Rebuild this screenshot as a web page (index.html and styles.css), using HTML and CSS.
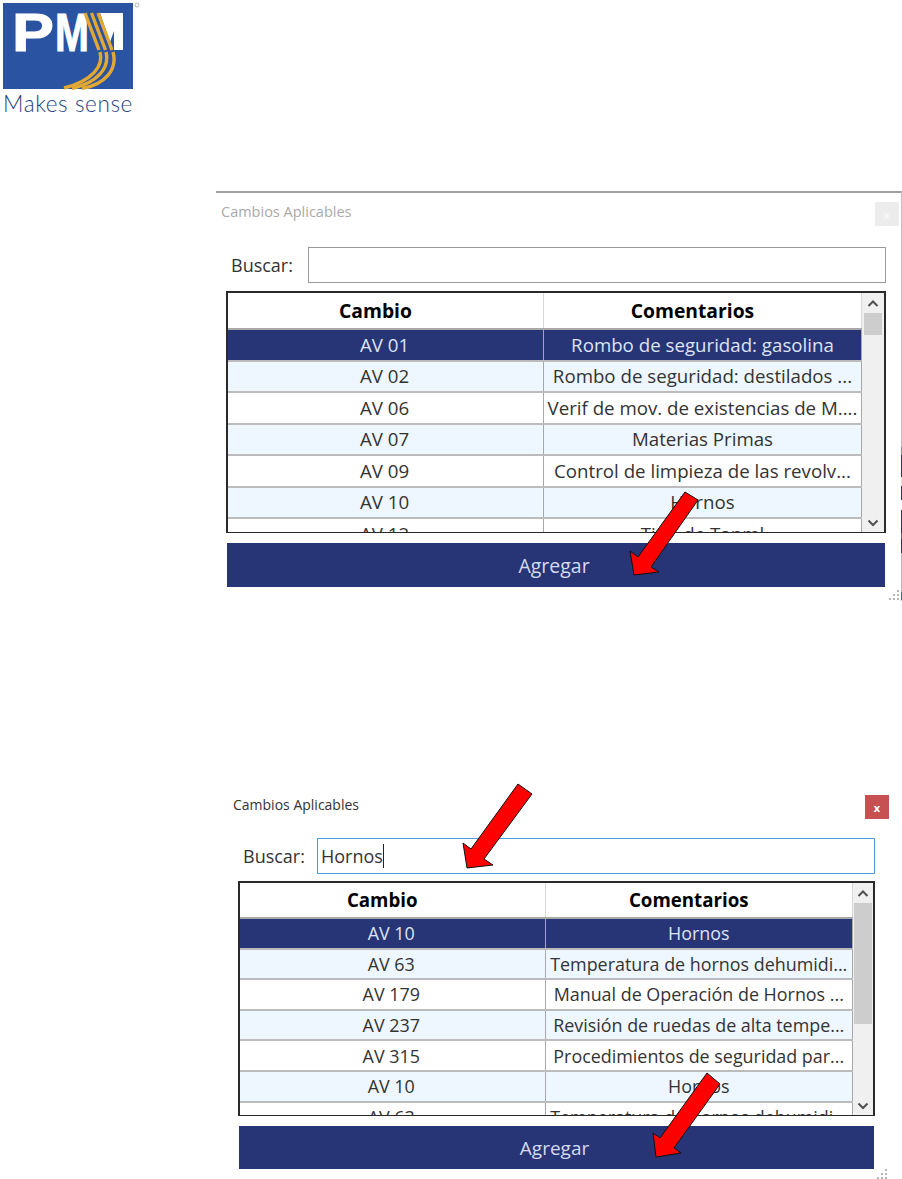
FILE: index.html
```html
<!DOCTYPE html>
<html lang="es">
<head>
<meta charset="utf-8">
<title>Cambios Aplicables</title>
<link rel="stylesheet" href="styles.css">
</head>
<body>
<div class="page">
  <header class="logo">
    <svg class="logo-mark" width="140" height="90" viewBox="0 0 140 90">
      <rect x="3" y="3" width="130" height="86" fill="#2a54a2"/>
      <text x="12" y="51" class="logo-letters" textLength="42" lengthAdjust="spacingAndGlyphs">P</text>
      <text x="55" y="51" class="logo-letters" textLength="34" lengthAdjust="spacingAndGlyphs">M</text>
      <path d="M100 13 L123 13 L123 50 L114 50 L114 31 L110 42 Z" fill="#fff"/>
      <g fill="none" stroke="#e3a832" stroke-width="3.4">
        <path d="M85 13 L99 50"/>
        <path d="M91.5 13 L105.500 50"/>
        <path d="M98 13 L112 50"/>
        <path d="M100 52 C104 66 92 81 64 88"/>
        <path d="M106 52 C110 68 97 83 72 88.5"/>
        <path d="M113 52 C118 70 104 85 82 88.5"/>
      </g>
      <circle cx="137" cy="5" r="2" fill="none" stroke="#999" stroke-width=".7"/>
    </svg>
    <div class="logo-tag">Makes sense</div>
  </header>

  <section class="dialog dialog-faded">
    <div class="title-row">
      <span class="title">Cambios Aplicables</span>
      <span class="close">x</span>
    </div>
    <div class="search-row">
      <label class="search-label">Buscar:</label>
      <div class="search-box"></div>
    </div>
    <div class="grid">
      <div class="grid-body">
        <table class="data">
          <thead><tr><th>Cambio</th><th>Comentarios</th></tr></thead>
          <tbody>
            <tr class="sel"><td>AV 01</td><td>Rombo de seguridad: gasolina</td></tr>
            <tr class="alt"><td>AV 02</td><td>Rombo de seguridad: destilados ...</td></tr>
            <tr><td>AV 06</td><td>Verif de mov. de existencias de M....</td></tr>
            <tr class="alt"><td>AV 07</td><td>Materias Primas</td></tr>
            <tr><td>AV 09</td><td>Control de limpieza de las revolv...</td></tr>
            <tr class="alt"><td>AV 10</td><td>Hornos</td></tr>
            <tr><td>AV 12</td><td>Tipo de Tanml</td></tr>
          </tbody>
        </table>
      </div>
      <div class="scrollbar">
        <svg class="chev" width="22" height="20" viewBox="0 0 22 20"><path d="M6.500 13 L11 8.500 L15.500 13" fill="none" stroke="#505050" stroke-width="2"/></svg>
        <div class="track"><div class="thumb"></div></div>
        <svg class="chev" width="22" height="20" viewBox="0 0 22 20"><path d="M6.500 8.500 L11 13 L15.500 8.500" fill="none" stroke="#505050" stroke-width="2"/></svg>
      </div>
    </div>
    <div class="action">Agregar</div>
    <svg class="grip" width="14" height="11" viewBox="0 0 14 11"><g fill="#b5b5b5"><rect x="10" y="0" width="2" height="2"/><rect x="6" y="4" width="2" height="2"/><rect x="10" y="4" width="2" height="2"/><rect x="2" y="8" width="2" height="2"/><rect x="6" y="8" width="2" height="2"/><rect x="10" y="8" width="2" height="2"/></g></svg>
  </section>

  <section class="dialog dialog-active">
    <div class="title-row">
      <span class="title">Cambios Aplicables</span>
      <span class="close">x</span>
    </div>
    <div class="search-row">
      <label class="search-label">Buscar:</label>
      <div class="search-box"><span class="typed">Hornos</span></div>
    </div>
    <div class="grid">
      <div class="grid-body">
        <table class="data">
          <thead><tr><th>Cambio</th><th>Comentarios</th></tr></thead>
          <tbody>
            <tr class="sel"><td>AV 10</td><td>Hornos</td></tr>
            <tr class="alt"><td>AV 63</td><td>Temperatura de hornos dehumidi...</td></tr>
            <tr><td>AV 179</td><td>Manual de Operación de Hornos ...</td></tr>
            <tr class="alt"><td>AV 237</td><td>Revisión de ruedas de alta tempe...</td></tr>
            <tr><td>AV 315</td><td>Procedimientos de seguridad par...</td></tr>
            <tr class="alt"><td>AV 10</td><td>Hornos</td></tr>
            <tr><td>AV 63</td><td>Temperatura de hornos dehumidi...</td></tr>
          </tbody>
        </table>
      </div>
      <div class="scrollbar">
        <svg class="chev" width="20" height="20" viewBox="0 0 20 20"><path d="M5.500 13 L10 8.500 L14.500 13" fill="none" stroke="#505050" stroke-width="2"/></svg>
        <div class="track"><div class="thumb"></div></div>
        <svg class="chev" width="20" height="20" viewBox="0 0 20 20"><path d="M5.500 8.500 L10 13 L14.500 8.500" fill="none" stroke="#505050" stroke-width="2"/></svg>
      </div>
    </div>
    <div class="action">Agregar</div>
    <svg class="grip" width="14" height="11" viewBox="0 0 14 11"><g fill="#b5b5b5"><rect x="10" y="0" width="2" height="2"/><rect x="6" y="4" width="2" height="2"/><rect x="10" y="4" width="2" height="2"/><rect x="2" y="8" width="2" height="2"/><rect x="6" y="8" width="2" height="2"/><rect x="10" y="8" width="2" height="2"/></g></svg>
  </section>

  <div class="edge-strip"></div>

  <svg class="arrows" width="902" height="1179" viewBox="0 0 902 1179">
    <g fill="#ff0000" stroke="#111" stroke-width="1">
      <polygon points="685,492 698,500 651,567 659,572 634,575 630,551 638,557"/>
      <polygon points="518,784 532,794 484,859 493,865 467,868 463,843 471,849"/>
      <polygon points="707,1073 720,1084 674,1148 681,1153 656,1157 653,1133 660,1138"/>
    </g>
  </svg>
</div>
</body>
</html>
```
FILE: styles.css
```css
* { box-sizing: border-box; }
html, body { margin: 0; padding: 0; background: #fff; }
body { font-family: "Open Sans", "Noto Sans", "Liberation Sans", sans-serif; color: #222; }
.page { position: relative; width: 902px; height: 1179px; overflow: hidden; }

.logo { height: 114px; }
.logo-mark { display: block; }
.logo-letters { font-family: "Liberation Sans", sans-serif; font-weight: 700; font-size: 53px; fill: #fff; stroke: #fff; stroke-width: 1px; }
.logo-tag { margin: 1px 0 0 3px; font-family: Lato, sans-serif; font-weight: 300; font-size: 22.5px; line-height: 26px; letter-spacing: .6px; color: #1f3f80; white-space: nowrap; }

.dialog { position: relative; }
.dialog-faded { margin: 77px 0 0 216px; width: 686px; height: 410px; border-top: 2px solid #a0a0a0; border-right: 1px solid #c0c0c0; padding: 9px 15px 0 10px; }
.dialog-active { margin: 192px 0 0 216px; width: 686px; height: 387px; padding: 2px 27px 0 22px; }

.title-row { display: flex; align-items: center; justify-content: space-between; height: 24px; }
.dialog-faded .title-row { margin: 0 -13px 0 -5px; }
.dialog-active .title-row { margin: 0 -14px 0 -5px; }
.title { margin-top: -4px; line-height: 20px; }
.dialog-faded .title { color: #a9a9a9; font-size: 14.5px; }
.dialog-active .title { color: #333; font-size: 14px; }
.close { display: flex; align-items: center; justify-content: center; width: 24px; height: 24px; font-size: 11px; font-weight: 700; color: #fff; }
.dialog-faded .close { background: #ececec; color: #f6f6f6; }
.dialog-active .close { background: #c75050; }

.search-row { display: flex; align-items: center; height: 36px; }
.dialog-faded .search-row { margin-top: 21px; margin-left: 5px; margin-bottom: 8px; }
.dialog-active .search-row { margin-top: 19px; margin-left: 5px; margin-bottom: 7px; }
.search-label { font-size: 18px; color: #333; }
.dialog-faded .search-label { width: 77px; }
.dialog-active .search-label { width: 74px; }
.search-box { flex: 1; height: 36px; background: #fff; display: flex; align-items: center; padding-left: 3px; }
.dialog-faded .search-box { border: 1px solid #9a9a9a; }
.dialog-active .search-box { border: 1px solid #4a9bdc; }
.typed { font-size: 18px; color: #333; border-right: 1px solid #222; line-height: 24px; }

.grid { display: flex; border: 2px solid #2a2a2a; border-bottom-width: 1px; background: #fff; overflow: hidden; }
.dialog-faded .grid { height: 242px; }
.dialog-active .grid { height: 235px; }
.grid-body { flex: 1; min-width: 0; overflow: hidden; }
.data { width: 100%; border-collapse: collapse; table-layout: fixed; }
.data th { height: 36px; font-weight: 700; color: #000; text-align: center; border-bottom: 2px solid #a8a8a8; border-right: 1px solid #d8d8d8; padding: 0 20px 0 0; line-height: 22px; }
.data td { text-align: center; padding: 0; white-space: nowrap; overflow: hidden; color: #333; line-height: 22px; border-bottom: 2px solid #bcbcbc; border-right: 1px solid #a8a8a8; }
.data td:first-child { padding-right: 2px; }
.dialog-faded .data th { font-size: 19.3px; }
.dialog-active .data th { font-size: 18.7px; height: 35px; }
.dialog-faded .data td { height: 31.5px; font-size: 18.7px; }
.dialog-active .data td { height: 30.6px; font-size: 17.9px; }
.data th:first-child, .data td:first-child { width: 49.8%; }
.data .alt td { background: #eef7ff; }
.data .sel td { background: #273476; color: #dde4f5; }

.scrollbar { display: flex; flex-direction: column; background: #f0f0f0; flex: none; }
.dialog-faded .scrollbar { width: 22px; }
.dialog-active .scrollbar { width: 20px; }
.chev { display: block; flex: none; }
.track { flex: 1; }
.thumb { background: #cdcdcd; }
.dialog-faded .thumb { height: 22px; margin: 0 2px; }
.dialog-active .thumb { height: 121px; margin: 0 1px; }

.action { display: flex; align-items: center; justify-content: center; height: 44px; padding-right: 4px; background: #273476; color: #d5dcef; }
.dialog-faded .action { margin: 10px 1px 0 1px; font-size: 19.5px; }
.dialog-active .action { margin: 10px 1px 0 1px; height: 43px; font-size: 19px; }

.grip { position: absolute; bottom: 0; right: 0; }
.dialog-active .grip { right: 13px; }

.edge-strip { position: absolute; left: 901px; top: 447px; width: 1px; height: 153px; background: linear-gradient(#8a8a8a 0 8px, #273476 8px 30px, #e8e0c8 30px 39px, #273476 39px 53px, #fff 53px 63px, #273476 63px 86px, #8a4a7a 86px 92px, #273476 92px 106px, #b8b8b8 106px 145px, #1f7a80 145px 153px); }

.arrows { position: absolute; left: 0; top: 0; pointer-events: none; }
```
